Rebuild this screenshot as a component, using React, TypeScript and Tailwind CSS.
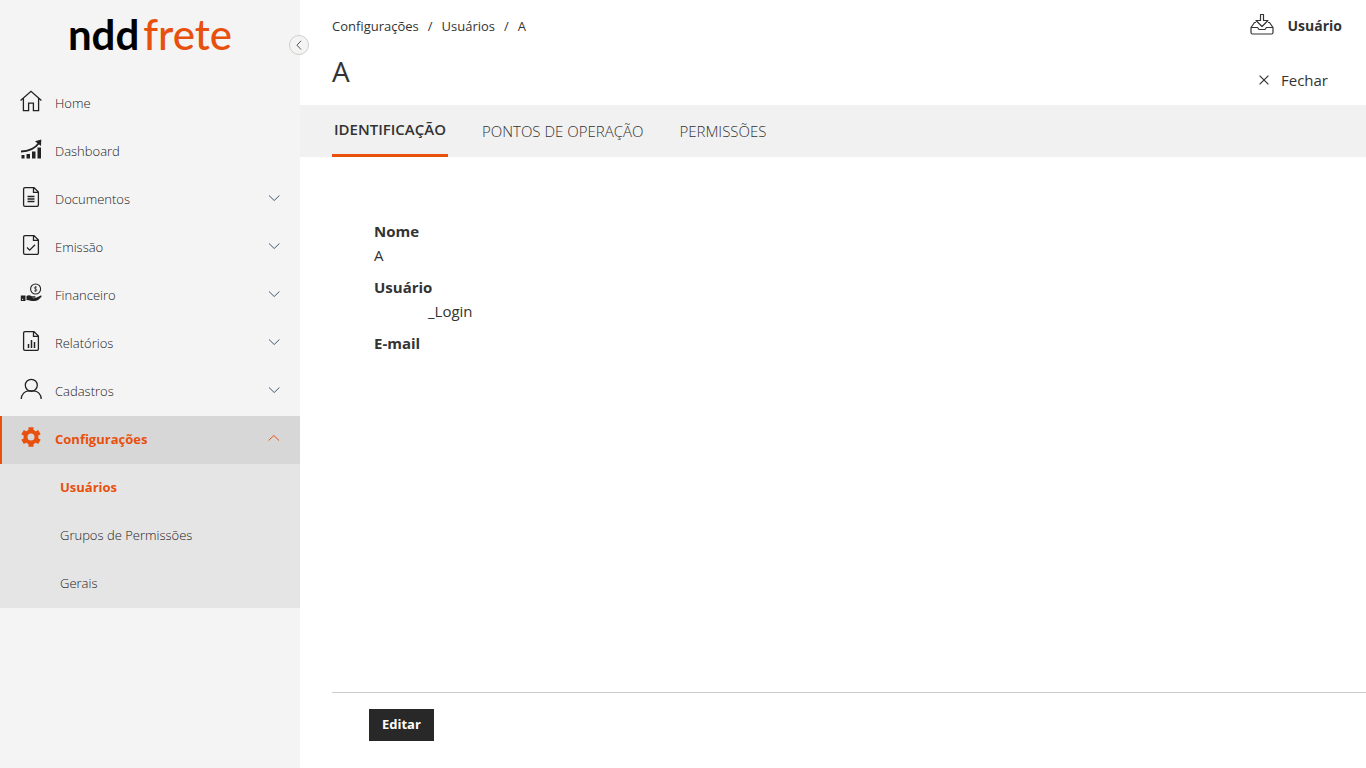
import React from 'react';

interface IconProps {
  className?: string;
}

const HomeIcon: React.FC<IconProps> = ({ className }) => (
  <svg className={className} viewBox="0 0 22 22" fill="none" stroke="currentColor" strokeWidth="1.3">
    <path d="M.6 10.6 11 1.3l10.4 9.3M3.4 8.4v12.2h5.2v-7.4h4.8v7.4h5.2V8.4" />
  </svg>
);

const DashboardIcon: React.FC<IconProps> = ({ className }) => (
  <svg className={className} viewBox="0 0 22 22" fill="currentColor">
    <path d="M1.5 17h3v3.5h-3zM6.5 16H10v4.500H6.500zM12 13.500h3.500v7H12zM17.500 9.500H21v11h-3.500z" />
    <path d="M1 13.500C8 13.500 15 10.500 19.500 4.500" fill="none" stroke="currentColor" strokeWidth="1.800" />
    <path d="M15 3.200 21.300 1.500 21 8z" />
  </svg>
);

// Sheet outline shared by the document-like menu icons
const FileIcon: React.FC<IconProps & { children: React.ReactNode }> = ({ className, children }) => (
  <svg className={className} viewBox="0 0 22 22" fill="none" stroke="currentColor" strokeWidth="1.3">
    <path d="M5 1.600h9l4.400 4.400v12.900a1.500 1.500 0 0 1-1.500 1.500H5A1.500 1.500 0 0 1 3.600 18.900V3.100A1.500 1.500 0 0 1 5 1.600zM13.500 1.800v4.600h4.700" />
    {children}
  </svg>
);

const DocumentIcon: React.FC<IconProps> = ({ className }) => (
  <FileIcon className={className}>
    <path d="M7.500 10.500h7M7.500 13h7M7.500 15.500h7" />
  </FileIcon>
);

const IssueIcon: React.FC<IconProps> = ({ className }) => (
  <FileIcon className={className}>
    <path d="m7 13.500 2.700 2.700 5.300-5.400" />
  </FileIcon>
);

const ReportIcon: React.FC<IconProps> = ({ className }) => (
  <FileIcon className={className}>
    <path d="M8.500 14v4M11.500 10v8M14.500 12v6" strokeWidth="1.500" />
  </FileIcon>
);

const FinanceIcon: React.FC<IconProps> = ({ className }) => (
  <svg className={className} viewBox="0 0 22 22" fill="currentColor">
    <circle cx="15.600" cy="7" r="5" fill="none" stroke="currentColor" strokeWidth="1.100" />
    <path d="M17 5.500c-.5-.7-2.800-.8-2.800.3 0 1.400 2.800.8 2.800 2.300 0 1.200-2.400 1.200-3 .4M15.600 4v6" fill="none" stroke="currentColor" strokeWidth=".7" />
    <path d="M.8 13.500h4.700v5.500H.8zM6.500 14c2-1.200 3.800-.7 5.200.3h3c1.300 0 1.300 1.400 0 1.500h-3.200c1.700.7 3.500.5 5.200-.4l3.600-1.700c1-.4 1.700.5 1 1.200-2 2.300-4.200 4.100-7 4.100-2.700 0-4.700-.6-7.800-1z" />
    <path d="M2 17.300h1.200" stroke="#f4f4f4" />
  </svg>
);

const PersonIcon: React.FC<IconProps> = ({ className }) => (
  <svg className={className} viewBox="0 0 22 22" fill="none" stroke="currentColor" strokeWidth="1.3">
    <circle cx="11.300" cy="7.300" r="6" />
    <path d="M1.200 21c.3-5 3.700-8 7.500-8.200h5c4 .2 7.400 3.200 7.500 8.200" />
  </svg>
);

const GearIcon: React.FC<IconProps> = ({ className }) => (
  <svg className={className} viewBox="0 0 22 22" fill="none" stroke="currentColor">
    <circle cx="11" cy="11" r="5.500" strokeWidth="4" />
    <path d="M11 1.300v3M11 17.700v3M2.600 6.150l2.600 1.500M16.800 14.350l2.600 1.500M2.600 15.850l2.600-1.500M16.800 7.650l2.600-1.500" strokeWidth="5" />
  </svg>
);

const InboxIcon: React.FC<IconProps> = ({ className }) => (
  <svg className={className} viewBox="0 0 24 22" fill="none" stroke="currentColor" strokeWidth="1.200" strokeLinejoin="round">
    <path d="M10.500 1.500h3v6H18l-6 6-6-6h4.500z" />
    <path d="M6 9.500H4.500L1 14.500h6.500l1.500 2h6l1.500-2H23l-3.500-5H18M1 14.500v5a1.500 1.500 0 0 0 1.500 1.500h19a1.500 1.500 0 0 0 1.500-1.500v-5" />
  </svg>
);

const ChevronIcon: React.FC<IconProps> = ({ className }) => (
  <svg className={className} viewBox="0 0 12 12" fill="none" stroke="currentColor">
    <path d="m1 3.500 5.200 5 5.200-5" />
  </svg>
);

const CloseIcon: React.FC<IconProps> = ({ className }) => (
  <svg className={className} viewBox="0 0 10 10" fill="none" stroke="currentColor" strokeWidth="1.200">
    <path d="m.6.6 8.800 8.800M9.400.6.6 9.400" />
  </svg>
);

interface MenuItem {
  label: string;
  icon: React.FC<IconProps>;
  expandable?: boolean;
  active?: boolean;
}

const menuItems: MenuItem[] = [
  { label: 'Home', icon: HomeIcon },
  { label: 'Dashboard', icon: DashboardIcon },
  { label: 'Documentos', icon: DocumentIcon, expandable: true },
  { label: 'Emissão', icon: IssueIcon, expandable: true },
  { label: 'Financeiro', icon: FinanceIcon, expandable: true },
  { label: 'Relatórios', icon: ReportIcon, expandable: true },
  { label: 'Cadastros', icon: PersonIcon, expandable: true },
  { label: 'Configurações', icon: GearIcon, expandable: true, active: true },
];

const subItems = [
  { label: 'Usuários', active: true },
  { label: 'Grupos de Permissões', active: false },
  { label: 'Gerais', active: false },
];

const tabs = [
  { label: 'IDENTIFICAÇÃO', active: true },
  { label: 'PONTOS DE OPERAÇÃO', active: false },
  { label: 'PERMISSÕES', active: false },
];

const Sidebar: React.FC = () => (
  <aside className="relative w-[300px] shrink-0 bg-[#f4f4f4]">
    <a href="#" className="flex h-20 items-start justify-center pt-2 font-[Lato,sans-serif] text-[42px] leading-[52px]">
      <span className="font-bold text-black">ndd</span>
      <span className="ml-1 font-medium text-[#e8500e]">frete</span>
    </a>
    <button
      aria-label="Recolher menu"
      className="absolute -right-[9px] top-[35px] flex h-5 w-5 items-center justify-center rounded-full border border-[#cfcfc9] bg-[#f4f4f4] text-[#333]"
    >
      <ChevronIcon className="h-[10px] w-[10px] rotate-90" />
    </button>
    <nav>
      <ul>
        {menuItems.map((item) => (
          <li key={item.label}>
            <a
              href="#"
              className={
                item.active
                  ? 'flex h-12 items-center border-l-2 border-[#e8500e] bg-[#d7d7d7] pl-[18px] pr-5 text-[13px] font-bold text-[#e8500e]'
                  : 'flex h-12 items-center pl-5 pr-5 text-[13px] font-light text-[#222]'
              }
            >
              <item.icon className="mb-[6px] h-[22px] w-[22px] shrink-0" />
              <span className="ml-[13px] flex-1">{item.label}</span>
              {item.expandable && (
                <ChevronIcon
                  className={item.active ? 'mb-1 h-3 w-3 rotate-180' : 'mb-1 h-3 w-3 text-[#3f5678]'}
                />
              )}
            </a>
          </li>
        ))}
      </ul>
      <ul className="bg-[#e5e5e5]">
        {subItems.map((item) => (
          <li key={item.label}>
            <a
              href="#"
              className={
                item.active
                  ? 'flex h-12 items-center pl-[60px] text-[13px] font-bold text-[#e8500e]'
                  : 'flex h-12 items-center pl-[60px] text-[13px] font-light text-[#222]'
              }
            >
              {item.label}
            </a>
          </li>
        ))}
      </ul>
    </nav>
  </aside>
);

const App: React.FC = () => {
  return (
    <div className="flex min-h-screen bg-white font-['Open_Sans',sans-serif] text-[#333]">
      <Sidebar />
      <main className="flex min-w-0 flex-1 flex-col">
        <header className="flex h-[105px] justify-between pl-8 pr-6">
          <div className="pt-4">
            <nav aria-label="Breadcrumb" className="flex gap-[9px] text-[13px] leading-5">
              <a href="#">Configurações</a>
              <span>/</span>
              <a href="#">Usuários</a>
              <span>/</span>
              <span>A</span>
            </nav>
            <h1 className="mt-[15px] text-[28px] font-medium leading-10">A</h1>
          </div>
          <div className="flex flex-col items-end pt-3">
            <button className="flex h-7 items-center text-sm font-bold">
              <InboxIcon className="mb-1 mr-[14px] h-[22px] w-6" />
              Usuário
            </button>
            <button className="mr-[14px] mt-7 flex h-6 items-center gap-3 text-[15px]">
              <CloseIcon className="h-[10px] w-[10px]" />
              Fechar
            </button>
          </div>
        </header>

        <div role="tablist" className="flex h-[52px] gap-8 bg-[#f1f1f1] px-8">
          {tabs.map((tab) => (
            <button
              key={tab.label}
              role="tab"
              aria-selected={tab.active}
              className={
                tab.active
                  ? 'border-b-[3px] border-[#e8500e] px-0.5 text-[15px] font-semibold'
                  : 'px-0.5 text-[15px] font-light'
              }
            >
              {tab.label}
            </button>
          ))}
        </div>

        <dl className="flex-1 pl-[74px] pt-[62px] text-[15px]">
          <dt className="font-bold leading-6">Nome</dt>
          <dd className="mb-2 leading-6">A</dd>
          <dt className="font-bold leading-6">Usuário</dt>
          <dd className="mb-2 pl-[54px] leading-6">_Login</dd>
          <dt className="font-bold leading-6">E-mail</dt>
        </dl>

        <footer className="ml-8 border-t border-[#ccc] pb-[27px] pl-[37px] pt-4">
          <button className="h-8 bg-[#282828] px-[13px] text-[13px] font-bold text-white">Editar</button>
        </footer>
      </main>
    </div>
  );
};

export default App;
